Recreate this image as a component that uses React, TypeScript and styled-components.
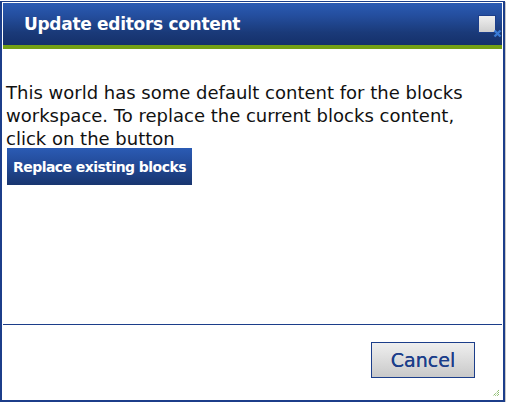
import React from "react";
import styled, { createGlobalStyle } from "styled-components";

const Global = createGlobalStyle`
  html, body { margin: 0; padding: 0; background: #ffffff; }
  body { font-family: "DejaVu Sans", Verdana, sans-serif; }
`;

const Dialog = styled.div`
  box-sizing: border-box;
  width: 505px;
  height: 401px;
  border: 2px solid #1c3e8a;
  border-top-width: 1px;
  margin-top: 1px;
  padding: 1px;
  display: flex;
  flex-direction: column;
  background: #fff;
  position: relative;
  box-shadow: 1px 1px 1px #c9c9c9;
`;

const TitleBar = styled.div`
  height: 42px;
  flex: none;
  background: linear-gradient(to bottom, #2b5bb4 0%, #244e9e 30%, #1a3a79 70%, #15306a 100%);
  border-bottom: 4px solid #74a014;
  display: flex;
  align-items: center;
  padding-left: 21px;
  position: relative;
`;

const Title = styled.div`
  color: #ffffff;
  font-family: "DejaVu Sans", sans-serif;
  font-weight: bold;
  font-size: 17px;
  letter-spacing: -0.3px;
  margin-top: -1px;
`;

const CloseBox = styled.div`
  position: absolute;
  right: 6px;
  top: 12px;
  width: 16px;
  height: 16px;
  border: 1px solid #1c3e8a;
  background: linear-gradient(to bottom, #f0f0f0, #cfcfcf);
`;

const CloseX = styled.svg`
  position: absolute;
  right: 0px;
  top: 26px;
`;

const Body = styled.div`
  flex: 1;
  padding: 32px 4px 0 3px;
  display: flex;
  flex-direction: column;
  align-items: flex-start;
`;

const Text = styled.p`
  margin: 0;
  max-width: 470px;
  font-family: "DejaVu Sans", sans-serif;
  font-size: 18px;
  line-height: 23px;
  color: #111;
`;

const PrimaryButton = styled.button`
  margin-top: -2px;
  margin-left: 1px;
  height: 37px;
  padding: 0 6px;
  border: none;
  background: linear-gradient(to bottom, #2b5bb4 0%, #234c9b 40%, #18356f 100%);
  color: #fff;
  font-family: "DejaVu Sans", sans-serif;
  font-weight: bold;
  font-size: 14px;
  letter-spacing: -0.55px;
`;

const Separator = styled.div`
  height: 1px;
  background: #1c3e8a;
  flex: none;
`;

const Footer = styled.div`
  height: 74px;
  flex: none;
  display: flex;
  justify-content: flex-end;
  align-items: flex-start;
  padding: 17px 27px 0 0;
  box-sizing: border-box;
  position: relative;
`;

const SecondaryButton = styled.button`
  width: 104px;
  height: 36px;
  border: 1px solid #1c3e8a;
  background: linear-gradient(to bottom, #efefef, #c9c9c9);
  color: #1c3e8a;
  font-family: "DejaVu Sans", sans-serif;
  font-size: 19px;
  padding: 0;
  text-shadow: 0 0 0.4px #1c3e8a;
`;

const Grip = styled.svg`
  position: absolute;
  right: 2px;
  bottom: 2px;
`;

export default function App() {
  return (
    <>
      <Global />
      <Dialog>
        <TitleBar>
          <Title>Update editors content</Title>
          <CloseBox />
          <CloseX width="9" height="9" viewBox="0 0 9 9">
            <path d="M1.5 1.5 L7.5 7.5 M7.5 1.5 L1.5 7.5" stroke="#3a7bd5" strokeWidth="2.4" />
          </CloseX>
        </TitleBar>
        <Body>
          <Text>
            This world has some default content for the blocks workspace. To replace the current blocks content,
            click on the button
          </Text>
          <PrimaryButton>Replace existing blocks</PrimaryButton>
        </Body>
        <Separator />
        <Footer>
          <SecondaryButton>Cancel</SecondaryButton>
          <Grip width="8" height="8" viewBox="0 0 8 8">
            <path d="M7 1 L1 7 M7 3 L3 7 M7 5 L5 7" stroke="#5aa02c" strokeWidth="1" strokeDasharray="1 1" />
          </Grip>
        </Footer>
      </Dialog>
    </>
  );
}
